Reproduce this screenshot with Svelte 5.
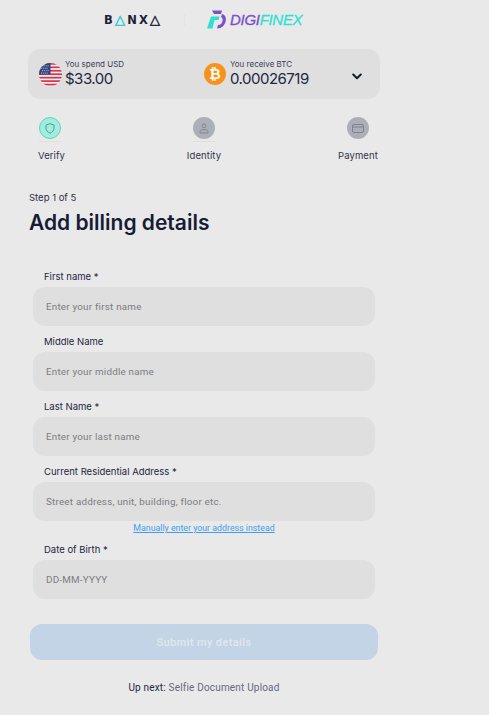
<script>
  const steps = [
    { label: 'Verify', icon: 'shield', active: true },
    { label: 'Identity', icon: 'person', active: false },
    { label: 'Payment', icon: 'card', active: false }
  ];

  const fields = [
    { label: 'First name *', placeholder: 'Enter your first name' },
    { label: 'Middle Name', placeholder: 'Enter your middle name' },
    { label: 'Last Name *', placeholder: 'Enter your last name' },
    { label: 'Current Residential Address *', placeholder: 'Street address, unit, building, floor etc.', link: 'Manually enter your address instead' },
    { label: 'Date of Birth *', placeholder: 'DD-MM-YYYY' }
  ];

  const stripes = [0, 1, 2, 3, 4, 5, 6];
</script>

<div class="page">
  <header class="logos">
    <span class="banxa">B<i class="teal">△</i>NX<i>△</i></span>
    <span class="divider"></span>
    <span class="digifinex">
      <svg width="20" height="20" viewBox="0 0 20 20">
        <path d="M5 0.500h10l-1 3.500H7z" fill="#7d50c8" />
        <path d="M15 4c4 1 4.500 5 3.500 8s-3.500 6.500-8.500 6.500l1-3.500c3 0 4-2 4.500-4s0-3-1.500-4z" fill="#7d50c8" />
        <path d="M4 6.500h8.500l-1 3.500H7.500l-2 8.500H0z" fill="#2fe0d2" />
      </svg>
      <span class="digi">DIGI</span><span class="finex">FINEX</span>
    </span>
  </header>

  <section class="summary">
    <div class="amount spend">
      <svg class="coin" width="23" height="23" viewBox="0 0 24 24">
        <defs>
          <clipPath id="flag"><circle cx="12" cy="12" r="12" /></clipPath>
        </defs>
        <g clip-path="url(#flag)">
          <rect width="24" height="24" fill="#f4f4f4" />
          {#each stripes as s}
            <rect y={s * 3.6} width="24" height="1.800" fill="#d8324a" />
          {/each}
          <rect width="12" height="12" fill="#2f4282" />
          <path d="M3 3h7M2 5.500h8M3 8h7M2 10.500h8" stroke="#e8e8f0" stroke-width="0.900" stroke-dasharray="1 1" />
        </g>
      </svg>
      <div class="values">
        <span class="caption">You spend USD</span>
        <span class="value">$33.00</span>
      </div>
    </div>
    <div class="amount receive">
      <svg class="coin" width="22" height="22" viewBox="0 0 22 22">
        <circle cx="11" cy="11" r="11" fill="#f7931a" />
        <text x="11" y="16" text-anchor="middle" class="btc">₿</text>
      </svg>
      <div class="values">
        <span class="caption">You receive BTC</span>
        <span class="value">0.00026719</span>
      </div>
    </div>
    <svg class="chevron" width="10" height="7" viewBox="0 0 10 7">
      <path d="M1.200 1.500L5 5.200l3.800-3.700" fill="none" stroke="#161c36" stroke-width="2" stroke-linecap="round" stroke-linejoin="round" />
    </svg>
  </section>

  <nav class="steps">
    {#each steps as step, i}
      <div class="step">
        <span class="dot" class:active={step.active}>
          {#if step.icon === 'shield'}
            <svg width="10" height="11" viewBox="0 0 10 11">
              <path d="M5 0.700l4 1.300v3.200c0 2.300-1.800 4-4 5-2.200-1-4-2.700-4-5V2z" fill="none" stroke="#14b8a0" stroke-width="1" />
            </svg>
          {:else if step.icon === 'person'}
            <svg width="10" height="11" viewBox="0 0 10 11">
              <circle cx="5" cy="2.800" r="1.900" fill="none" stroke="#7e828e" stroke-width="0.900" />
              <path d="M1 10V8.500c0-1 .8-1.800 1.800-1.800h4.400c1 0 1.800.8 1.800 1.800V10z" fill="none" stroke="#7e828e" stroke-width="0.900" />
            </svg>
          {:else}
            <svg width="12" height="9" viewBox="0 0 12 9">
              <rect x="0.500" y="0.500" width="11" height="8" rx="1.500" fill="none" stroke="#7e828e" stroke-width="1" />
              <path d="M0.500 3h11" stroke="#7e828e" stroke-width="1" />
            </svg>
          {/if}
        </span>
        <span class="rule" class:hidden={i === steps.length - 1}></span>
        <span class="step-label">{step.label}</span>
      </div>
    {/each}
  </nav>

  <p class="step-count">Step 1 of 5</p>
  <h1>Add billing details</h1>

  <form class="form">
    {#each fields as field}
      <div class="field">
        <span class="label">{field.label}</span>
        <div class="input">{field.placeholder}</div>
        {#if field.link}
          <a class="manual" href="#manual">{field.link}</a>
        {/if}
      </div>
    {/each}
  </form>

  <button class="submit" type="button">Submit my details</button>

  <p class="next"><span>Up next:</span> Selfie Document Upload</p>
</div>

<style>
  :global(body) {
    background: #e9e9e9;
    font-family: Inter, "Liberation Sans", sans-serif;
    color: #161c36;
  }

  .page {
    width: 352px;
    margin-left: 28px;
    height: 715px;
    overflow: hidden;
  }

  .logos {
    height: 49px;
    padding-bottom: 10px;
    box-sizing: border-box;
    display: flex;
    align-items: center;
    margin-left: 76px;
  }

  .banxa {
    font-family: "DejaVu Sans", sans-serif;
    font-weight: 700;
    font-size: 11.500px;
    letter-spacing: 2.200px;
    color: #1c2238;
    width: 62px;
    white-space: nowrap;
    display: flex;
    align-items: center;
  }

  .banxa i {
    font-style: normal;
    font-family: "DejaVu Sans", sans-serif;
    font-weight: 400;
    font-size: 13px;
    line-height: 12px;
    letter-spacing: 2.200px;
    -webkit-text-stroke: 0.5px currentColor;
  }

  .banxa i.teal {
    color: #2fc8d8;
  }

  .divider {
    width: 1px;
    height: 12px;
    background: #e2e2e2;
    margin: 0 22px 0 18px;
  }

  .digifinex {
    display: flex;
    align-items: center;
    font-family: "Liberation Sans", sans-serif;
    font-style: italic;
    font-size: 15px;
    font-weight: 400;
    letter-spacing: -0.3px;
    -webkit-text-stroke: 0.3px currentColor;
  }

  .digifinex svg {
    margin-right: 3px;
  }

  .digi {
    color: #7d50c8;
  }

  .finex {
    color: #2fe0d2;
  }

  .summary {
    height: 50px;
    background: #dfdfdf;
    border-radius: 12px;
    display: flex;
    align-items: center;
    padding-left: 11px;
  }

  .amount {
    display: flex;
    align-items: center;
  }

  .spend {
    width: 165px;
  }

  .receive {
    width: 148px;
  }

  .coin {
    flex: none;
    margin-right: 3px;
  }

  .receive .coin {
    margin-right: 4px;
  }

  .btc {
    font-family: "DejaVu Sans", sans-serif;
    font-size: 14px;
    font-weight: 700;
    fill: #fff;
  }

  .values {
    display: flex;
    flex-direction: column;
  }

  .caption {
    font-size: 8px;
    line-height: 9px;
    color: #3a3f55;
    margin-top: -1px;
  }

  .value {
    font-size: 15px;
    line-height: 18px;
    letter-spacing: -0.5px;
    margin-top: 1px;
    color: #22273f;
  }

  .chevron {
    margin-top: 5px;
  }

  .steps {
    display: flex;
    justify-content: space-between;
    margin-top: 18px;
  }

  .step {
    width: 44px;
    display: flex;
    flex-direction: column;
    align-items: center;
  }

  .dot {
    width: 22px;
    height: 22px;
    border-radius: 50%;
    background: #adafb8;
    display: flex;
    align-items: center;
    justify-content: center;
    box-sizing: border-box;
  }

  .dot.active {
    background: #a9e9dc;
    border: 1px solid #4fdcc4;
  }

  .rule {
    width: 22px;
    height: 1px;
    background: #e0e0e0;
    margin-top: 2px;
  }

  .rule.hidden {
    background: transparent;
  }

  .step-label {
    font-size: 9.500px;
    letter-spacing: 0.1px;
    line-height: 12px;
    margin-top: 8px;
    color: #30344c;
    white-space: nowrap;
  }

  .step:first-child .step-label {
    margin-left: 3px;
  }

  .step-count {
    margin: 30px 0 0 1px;
    font-size: 9.500px;
    line-height: 12px;
    color: #2a2f48;
  }

  h1 {
    margin: 6px 0 0 1px;
    font-family: Inter, sans-serif;
    font-size: 21px;
    line-height: 26px;
    font-weight: 600;
    color: #161c36;
  }

  .form {
    margin-top: 35px;
    margin-left: 5px;
    width: 342px;
  }

  .field {
    min-height: 64px;
    padding-bottom: 1px;
    display: flex;
    flex-direction: column;
  }

  .label {
    font-size: 9.500px;
    line-height: 12px;
    margin-left: 11px;
    margin-bottom: 4px;
    color: #22273f;
  }

  .input {
    height: 39px;
    flex: none;
    background: #dfdfdf;
    border-radius: 12px;
    padding-left: 13px;
    font-family: Roboto, sans-serif;
    font-size: 9.800px;
    letter-spacing: 0.23px;
    line-height: 39px;
    color: #7c7c80;
  }

  .input + .manual {
    margin-bottom: 9px;
  }

  .manual {
    align-self: center;
    font-family: Roboto, sans-serif;
    font-size: 8.800px;
    line-height: 11px;
    margin-top: 2px;
    color: #3f9eef;
    white-space: nowrap;
  }

  .submit {
    display: block;
    width: 348px;
    height: 36px;
    margin: 15px 0 0 2px;
    background: #c2d4e6;
    border: none;
    border-radius: 12px;
    font-family: Roboto, sans-serif;
    font-size: 11px;
    font-weight: 500;
    letter-spacing: 0.4px;
    color: #e3e7ec;
  }

  .next {
    margin: 22px 0 0;
    text-align: center;
    font-family: Roboto, sans-serif;
    font-size: 10px;
    letter-spacing: 0.18px;
    line-height: 12px;
    color: #666a7c;
  }

  .next span {
    color: #22273f;
  }
</style>
